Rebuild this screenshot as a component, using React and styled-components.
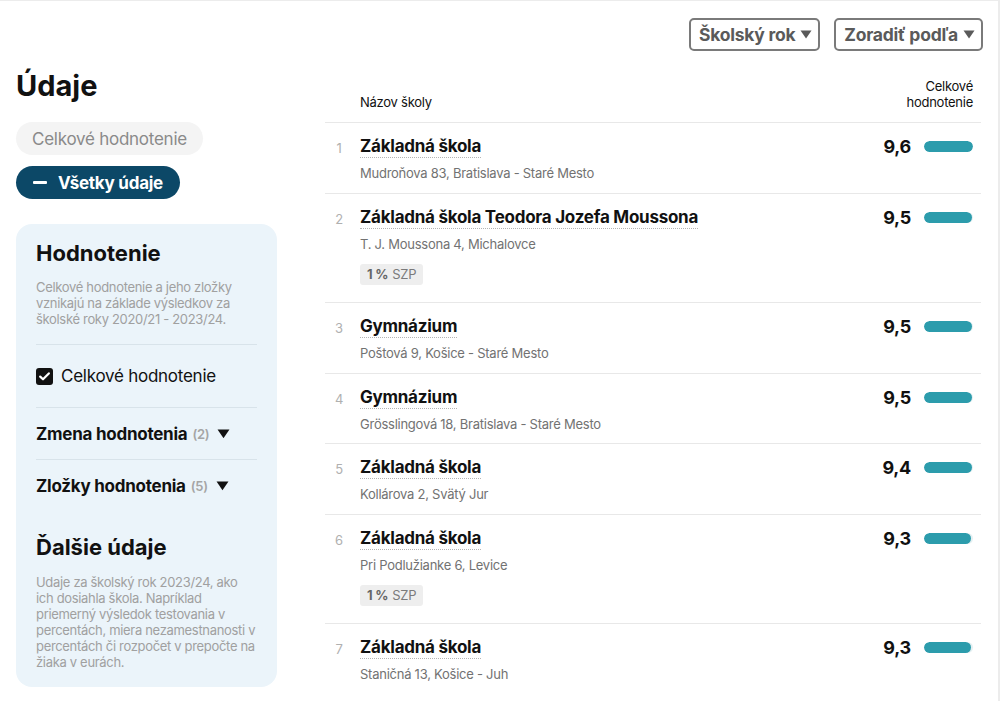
import React from 'react'
import styled, { createGlobalStyle } from 'styled-components'

const schools = [
    { rank: 1, name: "Základná škola", address: "Mudroňova 83, Bratislava - Staré Mesto", score: 9.6 },
    { rank: 2, name: "Základná škola Teodora Jozefa Moussona", address: "T. J. Moussona 4, Michalovce", score: 9.5, szp: true },
    { rank: 3, name: "Gymnázium", address: "Poštová 9, Košice - Staré Mesto", score: 9.5 },
    { rank: 4, name: "Gymnázium", address: "Grösslingová 18, Bratislava - Staré Mesto", score: 9.5 },
    { rank: 5, name: "Základná škola", address: "Kollárova 2, Svätý Jur", score: 9.4 },
    { rank: 6, name: "Základná škola", address: "Pri Podlužianke 6, Levice", score: 9.3, szp: true },
    { rank: 7, name: "Základná škola", address: "Staničná 13, Košice - Juh", score: 9.3 },
]

const Caret = ({ size = 12, color = "currentColor" }) => (
    <svg width={size} height={size * 0.75} viewBox="0 0 12 9">
        <path d="M0.5 0.5 H11.5 L6 8.5 Z" fill={color} />
    </svg>
)

const App = () => {
    return (
        <>
            <GlobalStyle />
            <Page>
                <Toolbar>
                    <SelectButton>Školský rok <Caret size={12} /></SelectButton>
                    <SelectButton>Zoradiť podľa <Caret size={12} /></SelectButton>
                </Toolbar>
                <Body>
                    <Sidebar>
                        <PageTitle>Údaje</PageTitle>
                        <GhostPill>Celkové hodnotenie</GhostPill>
                        <DarkPill>
                            <Minus />
                            Všetky údaje
                        </DarkPill>
                        <Panel>
                            <PanelTitle>Hodnotenie</PanelTitle>
                            <PanelText>
                                Celkové hodnotenie a jeho zložky vznikajú na základe výsledkov za školské roky 2020/21 - 2023/24.
                            </PanelText>
                            <CheckRow>
                                <CheckBox>
                                    <svg width="11" height="9" viewBox="0 0 11 9">
                                        <path d="M1.2 4.6 L4 7.3 L9.8 1.4" stroke="#fff" strokeWidth="2.2" fill="none" strokeLinecap="round" strokeLinejoin="round" />
                                    </svg>
                                </CheckBox>
                                Celkové hodnotenie
                            </CheckRow>
                            <GroupRow>
                                Zmena hodnotenia <Count>(2)</Count> <Caret size={13} />
                            </GroupRow>
                            <GroupRow last>
                                Zložky hodnotenia <Count>(5)</Count> <Caret size={13} />
                            </GroupRow>
                            <PanelTitle second>Ďalšie údaje</PanelTitle>
                            <PanelText plain>
                                Udaje za školský rok 2023/24, ako ich dosiahla škola. Napríklad priemerný výsledok testovania v percentách, miera nezamestnanosti v percentách či rozpočet v prepočte na žiaka v eurách.
                            </PanelText>
                        </Panel>
                    </Sidebar>
                    <List>
                        <ListHeader>
                            <HeaderName>Názov školy</HeaderName>
                            <HeaderScore>Celkové<br />hodnotenie</HeaderScore>
                        </ListHeader>
                        {schools.map((s) => (
                            <Row key={s.rank}>
                                <Rank>{s.rank}</Rank>
                                <Info>
                                    <Name>{s.name}</Name>
                                    <Address>{s.address}</Address>
                                    {s.szp && (
                                        <Tag><b>1 %</b> SZP</Tag>
                                    )}
                                </Info>
                                <Score>{s.score.toFixed(1).replace(".", ",")}</Score>
                                <Track>
                                    <Fill style={{ width: `${(s.score / 9.6) * 100}%` }} />
                                </Track>
                            </Row>
                        ))}
                    </List>
                </Body>
            </Page>
        </>
    )
}

export default App

const GlobalStyle = createGlobalStyle`
    body {
        margin: 0;
        background: #fff;
        font-family: Inter, "Noto Sans", sans-serif;
        color: #111;
    }
`;
const Page = styled.div`
    width: 1000px;
    height: 701px;
    box-sizing: border-box;
    border-top: 1px solid #ececec;
    border-right: 2px solid #ececec;
    padding: 17px 17px 0 16px;
    overflow: hidden;
    letter-spacing: -0.25px;
`;
const Toolbar = styled.div`
    display: flex;
    justify-content: flex-end;
    gap: 14px;
    margin-right: -2px;
`;
const SelectButton = styled.div`
    display: flex;
    align-items: center;
    gap: 5px;
    height: 33px;
    box-sizing: border-box;
    padding: 0 6px 0 8px;
    border: 2px solid #7a7a7a;
    border-radius: 5px;
    font-size: 17.5px;
    font-weight: 700;
    color: #5a5a5a;
`;
const Body = styled.div`
    display: grid;
    grid-template-columns: 261px 1fr;
    gap: 48px;
`;
const Sidebar = styled.div`
    display: flex;
    flex-direction: column;
    align-items: flex-start;
`;
const PageTitle = styled.h1`
    margin: 17px 0 0;
    font-size: 29px;
    line-height: 36px;
    font-weight: 700;
    letter-spacing: 0;
`;
const GhostPill = styled.div`
    margin-top: 18px;
    height: 33px;
    display: flex;
    align-items: center;
    padding: 0 16px;
    border-radius: 17px;
    background: #f4f4f4;
    color: #8a8a8a;
    font-size: 17px;
`;
const DarkPill = styled.div`
    margin-top: 11px;
    height: 33px;
    display: flex;
    align-items: center;
    gap: 11px;
    padding: 0 17px;
    border-radius: 17px;
    background: #0c4867;
    color: #fff;
    font-size: 17px;
    font-weight: 700;
`;
const Minus = styled.span`
    width: 14px;
    height: 3px;
    border-radius: 1px;
    background: #fff;
`;
const Panel = styled.div`
    margin-top: 25px;
    width: 100%;
    box-sizing: border-box;
    padding: 16px 20px 17px;
    border-radius: 16px;
    background: #ebf4fa;
`;
const PanelTitle = styled.h2`
    margin: ${(p) => (p.second ? "22px" : "0")} 0 0;
    font-size: 22px;
    line-height: 26px;
    font-weight: 700;
    letter-spacing: 0;
`;
const PanelText = styled.p`
    margin: ${(p) => (p.plain ? "14px 0 0" : "13px 0 0")};
    padding-bottom: ${(p) => (p.plain ? "0" : "17px")};
    border-bottom: ${(p) => (p.plain ? "none" : "1px solid #d8e3ea")};
    font-size: 13px;
    line-height: 16px;
    letter-spacing: -0.32px;
    color: #a0a0a0;
`;
const CheckRow = styled.div`
    display: flex;
    align-items: center;
    gap: 8px;
    height: 62px;
    border-bottom: 1px solid #d8e3ea;
    font-size: 17px;
`;
const CheckBox = styled.span`
    width: 17px;
    height: 17px;
    border-radius: 3px;
    background: #111;
    display: flex;
    align-items: center;
    justify-content: center;
`;
const GroupRow = styled.div`
    display: flex;
    align-items: center;
    gap: 5px;
    height: ${(p) => (p.last ? "52px" : "51px")};
    border-bottom: ${(p) => (p.last ? "none" : "1px solid #d8e3ea")};
    font-size: 17px;
    font-weight: 700;
    svg {
        margin-left: 3px;
    }
`;
const Count = styled.span`
    font-size: 13px;
    font-weight: 600;
    color: #a5a5a5;
`;
const List = styled.div`
    padding-top: 27px;
`;
const ListHeader = styled.div`
    display: flex;
    justify-content: space-between;
    align-items: flex-end;
    padding: 0 8px 12px 35px;
    border-bottom: 1px solid #e8e8e8;
    font-size: 13px;
    line-height: 16px;
`;
const HeaderName = styled.div``;
const HeaderScore = styled.div`
    text-align: right;
`;
const Row = styled.div`
    display: flex;
    align-items: flex-start;
    padding: 13px 8px 10.5px 0;
    border-bottom: 1px solid #e8e8e8;
    &:last-child {
        border-bottom: none;
    }
`;
const Rank = styled.div`
    width: 28px;
    margin-right: 7px;
    text-align: center;
    font-size: 13px;
    line-height: 24px;
    color: #b0b0b0;
`;
const Info = styled.div`
    flex: 1;
    display: flex;
    flex-direction: column;
    align-items: flex-start;
`;
const Name = styled.div`
    font-size: 17px;
    line-height: 21px;
    font-weight: 700;
    border-bottom: 1px dotted #b5b5b5;
`;
const Address = styled.div`
    margin-top: 6px;
    font-size: 13px;
    line-height: 18px;
    color: #727272;
`;
const Tag = styled.div`
    margin: 11px 0 7px;
    padding: 0 7px;
    height: 21px;
    display: flex;
    align-items: center;
    gap: 4px;
    border-radius: 3px;
    background: #eeeeee;
    font-size: 13px;
    color: #7a7a7a;
    b {
        color: #666;
        font-weight: 700;
    }
`;
const Score = styled.div`
    font-size: 18px;
    line-height: 22px;
    font-weight: 700;
    margin-right: 13px;
`;
const Track = styled.div`
    margin-top: 5px;
    width: 49px;
    height: 11px;
    border-radius: 6px;
    background: #e4f0f2;
    overflow: hidden;
`;
const Fill = styled.div`
    height: 100%;
    border-radius: 6px;
    background: #2c9cac;
`;
